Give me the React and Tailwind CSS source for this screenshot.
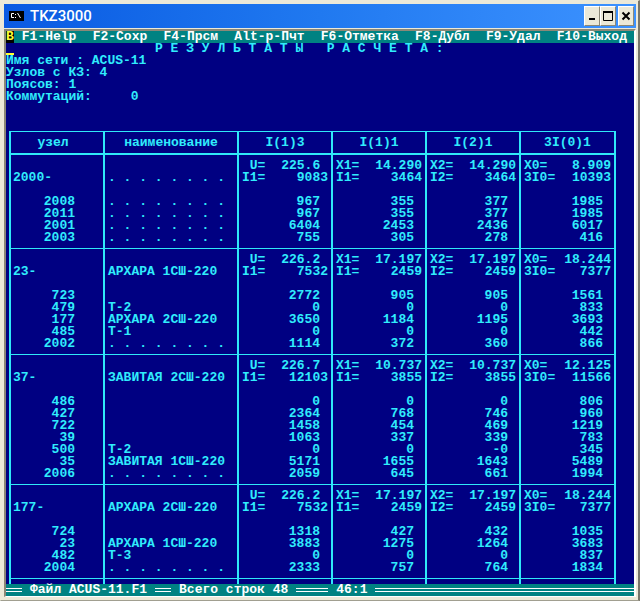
const menuItems = [
  { key: "F1", label: "F1-Help" },
  { key: "F2", label: "F2-Сохр" },
  { key: "F4", label: "F4-Прсм" },
  { key: "Alt-p", label: "Alt-p-Пчт" },
  { key: "F6", label: "F6-Отметка" },
  { key: "F8", label: "F8-Дубл" },
  { key: "F9", label: "F9-Удал" },
  { key: "F10", label: "F10-Выход" }
];

const columns = ["I(1)3", "I(1)1", "I(2)1", "3I(0)1"];

const DOTS = ". . . . . . . .";

const nodes = [
  {
    id: "2000-",
    name: DOTS,
    top: ["225.6 ", "14.290", "14.290", "8.909"],
    current: [9083, 3464, 3464, 10393],
    branches: [
      ["2008", DOTS, "967", "355", "377", "1985"],
      ["2011", DOTS, "967", "355", "377", "1985"],
      ["2001", DOTS, "6404", "2453", "2436", "6017"],
      ["2003", DOTS, "755", "305", "278", "416"]
    ]
  },
  {
    id: "23-",
    name: "АРХАРА 1СШ-220",
    top: ["226.2 ", "17.197", "17.197", "18.244"],
    current: [7532, 2459, 2459, 7377],
    branches: [
      ["723", "", "2772", "905", "905", "1561"],
      ["479", "Т-2", "0", "0", "0", "833"],
      ["177", "АРХАРА 2СШ-220", "3650", "1184", "1195", "3693"],
      ["485", "Т-1", "0", "0", "0", "442"],
      ["2002", DOTS, "1114", "372", "360", "866"]
    ]
  },
  {
    id: "37-",
    name: "ЗАВИТАЯ 2СШ-220",
    top: ["226.7 ", "10.737", "10.737", "12.125"],
    current: [12103, 3855, 3855, 11566],
    branches: [
      ["486", "", "0", "0", "0", "806"],
      ["427", "", "2364", "768", "746", "960"],
      ["722", "", "1458", "454", "469", "1219"],
      ["39", "", "1063", "337", "339", "783"],
      ["500", "Т-2", "0", "0", "-0", "345"],
      ["35", "ЗАВИТАЯ 1СШ-220", "5171", "1655", "1643", "5489"],
      ["2006", DOTS, "2059", "645", "661", "1994"]
    ]
  },
  {
    id: "177-",
    name: "АРХАРА 2СШ-220",
    top: ["226.2 ", "17.197", "17.197", "18.244"],
    current: [7532, 2459, 2459, 7377],
    branches: [
      ["724", "", "1318", "427", "432", "1035"],
      ["23", "АРХАРА 1СШ-220", "3883", "1275", "1264", "3683"],
      ["482", "Т-3", "0", "0", "0", "837"],
      ["2004", DOTS, "2333", "757", "764", "1834"]
    ]
  }
];

const topLabels = [" U=", "X1=", "X2=", "X0="];
const currentLabels = ["I1=", "I1=", "I2=", "3I0="];

const WindowButton = ({ label, children }) => (
  <button
    type="button"
    aria-label={label}
    className="flex h-5 w-4 items-center justify-center border border-t-white border-r-[#8b8877] border-b-[#8b8877] border-l-white bg-[#ece9d8] text-black"
  >
    {children}
  </button>
);

const TitleBar = () => (
  <header className="flex h-6 items-center bg-linear-to-r from-[#0a5ae2] via-[#2079f0] to-[#3c92ff] pr-0.5 pl-[5px]">
    <svg className="h-[10px] w-[15px]" viewBox="0 0 15 10" aria-hidden="true">
      <rect width="15" height="10" fill="#000" />
      <path d="M5 2.5H2.5V6.5H5" fill="none" stroke="#fff" />
      <path d="M6 3h1v1h-1zM6 6h1v1h-1z" fill="#fff" />
      <path d="M8.5 2l3 5" fill="none" stroke="#fff" />
    </svg>
    <h1 className="ml-1.5 font-[Roboto,sans-serif] text-[15px] font-medium text-white">TKZ3000</h1>
    <div className="ml-auto flex">
      <WindowButton label="Свернуть">
        <svg className="h-3 w-3 shrink-0" viewBox="0 0 12 12">
          <path d="M3 9h6" stroke="currentColor" strokeWidth="2" />
        </svg>
      </WindowButton>
      <WindowButton label="Развернуть">
        <svg className="h-3 w-3 shrink-0" viewBox="0 0 12 12">
          <path d="M1.5 2v8.5h9V2" fill="none" stroke="currentColor" />
          <path d="M1 2h10" stroke="currentColor" strokeWidth="2" />
        </svg>
      </WindowButton>
      <div className="w-0.5" />
      <WindowButton label="Закрыть">
        <svg className="h-3 w-3 shrink-0" viewBox="0 0 12 12">
          <path d="M2.5 2.5l7 7M9.5 2.5l-7 7" stroke="currentColor" strokeWidth="2" />
        </svg>
      </WindowButton>
    </div>
  </header>
);

const MenuBar = () => (
  <nav className="flex h-3 items-center bg-[#008282] text-white">
    <span className="bg-black text-[#ffff30]">В</span>
    <div className="flex grow justify-between pr-[7px] pl-2">
      {menuItems.map((item) => (
        <button key={item.key} type="button" className="whitespace-nowrap">
          {item.label}
        </button>
      ))}
    </div>
  </nav>
);

const Pair = ({ label, value }) => (
  <div className="flex justify-between">
    <span>{label}</span>
    <span>{value}</span>
  </div>
);

const NodeGroup = ({ node }) => (
  <tbody className="[&>tr:first-child>*]:pt-[5px] [&>tr:last-child>*]:border-b [&>tr:last-child>*]:pb-1">
    <tr>
      <td className="border-l-2" />
      <td className="border-l-2" />
      {node.top.map((value, i) => (
        <td key={i} className="border-l-2 pr-[3px] pl-[3px]">
          <Pair label={topLabels[i]} value={value} />
        </td>
      ))}
    </tr>
    <tr>
      <th scope="row" className="border-l-2 pl-0.5 text-left">
        {node.id}
      </th>
      <td className="border-l-2 pl-[3px]">{node.name}</td>
      {node.current.map((value, i) => (
        <td key={i} className="border-l-2 pr-[3px] pl-[3px]">
          <Pair label={currentLabels[i]} value={value} />
        </td>
      ))}
    </tr>
    <tr className="h-3">
      {[0, 1, 2, 3, 4, 5].map((i) => (
        <td key={i} className="border-l-2" />
      ))}
    </tr>
    {node.branches.map(([id, name, ...values]) => (
      <tr key={id} className="h-3">
        <th scope="row" className="border-l-2 pr-7 text-right">
          {id}
        </th>
        <td className="border-l-2 pl-[3px]">{name}</td>
        {values.map((value, i) => (
          <td key={i} className="border-l-2 pr-[11px] text-right">
            {value}
          </td>
        ))}
      </tr>
    ))}
  </tbody>
);

const ResultsTable = () => (
  <div className="mt-7 mr-[18px] ml-[3px]">
    <table className="w-full table-fixed border-separate border-spacing-0 border-r-2 border-[#30e8f8] whitespace-pre [&_td]:border-[#30e8f8] [&_th]:border-[#30e8f8] [&_th]:font-bold">
      <colgroup>
        <col className="w-[94px]" />
        <col />
        <col className="w-[94px]" />
        <col className="w-[94px]" />
        <col className="w-[94px]" />
        <col className="w-[95px]" />
      </colgroup>
      <thead className="[&_th]:border-t [&_th]:border-b-2 [&_th]:border-l-2 [&_th]:pt-[5px] [&_th]:pb-1">
        <tr>
          <th scope="col" className="pr-2">
            узел
          </th>
          <th scope="col">наименование</th>
          {columns.map((column) => (
            <th key={column} scope="col">
              {column}
            </th>
          ))}
        </tr>
      </thead>
      {nodes.map((node) => (
        <NodeGroup key={node.id} node={node} />
      ))}
      <tbody aria-hidden="true">
        <tr className="h-[5px]">
          {[0, 1, 2, 3, 4, 5].map((i) => (
            <td key={i} className="border-l-2" />
          ))}
        </tr>
      </tbody>
    </table>
  </div>
);

const DoubleRule = ({ className }) => <span className={`h-1 border-y border-white ${className}`} />;

const StatusBar = () => (
  <footer className="flex h-3 items-center gap-2 bg-[#008282] text-white">
    <DoubleRule className="w-4" />
    <span>Файл ACUS-11.F1</span>
    <DoubleRule className="w-4" />
    <span>Всего строк 48</span>
    <DoubleRule className="w-8" />
    <span>46:1</span>
    <DoubleRule className="grow" />
  </footer>
);

export default function App() {
  return (
    <div className="bg-white pr-0.5">
      <div className="border-t border-r-2 border-b border-l border-t-[#ece9d8] border-r-[#77756a] border-b-[#a19f90] border-l-[#ece9d8] bg-[#ece9d8] pt-[3px] pr-0.5 pb-[3px] pl-[3px]">
        <TitleBar />
        <main className="mt-px border-t-2 border-r-2 border-b border-l-2 border-t-[#8b8877] border-r-white border-b-white border-l-[#8b8877] bg-[#000082] font-['Liberation_Mono',monospace] text-[13px] leading-3 font-bold text-[#30ecfc]">
          <MenuBar />
          <div className="whitespace-pre">
            <div className="flex">
              <span className="mr-[141px] h-3 w-2 border-b-2 border-[#ffff30]" />
              <h2>Р Е З У Л Ь Т А Т Ы   Р А С Ч Е Т А :</h2>
            </div>
            <p>Имя сети : ACUS-11</p>
            <p>Узлов с КЗ: 4</p>
            <p>Поясов: 1</p>
            <p>Коммутаций:     0</p>
          </div>
          <ResultsTable />
          <StatusBar />
        </main>
      </div>
    </div>
  );
}
